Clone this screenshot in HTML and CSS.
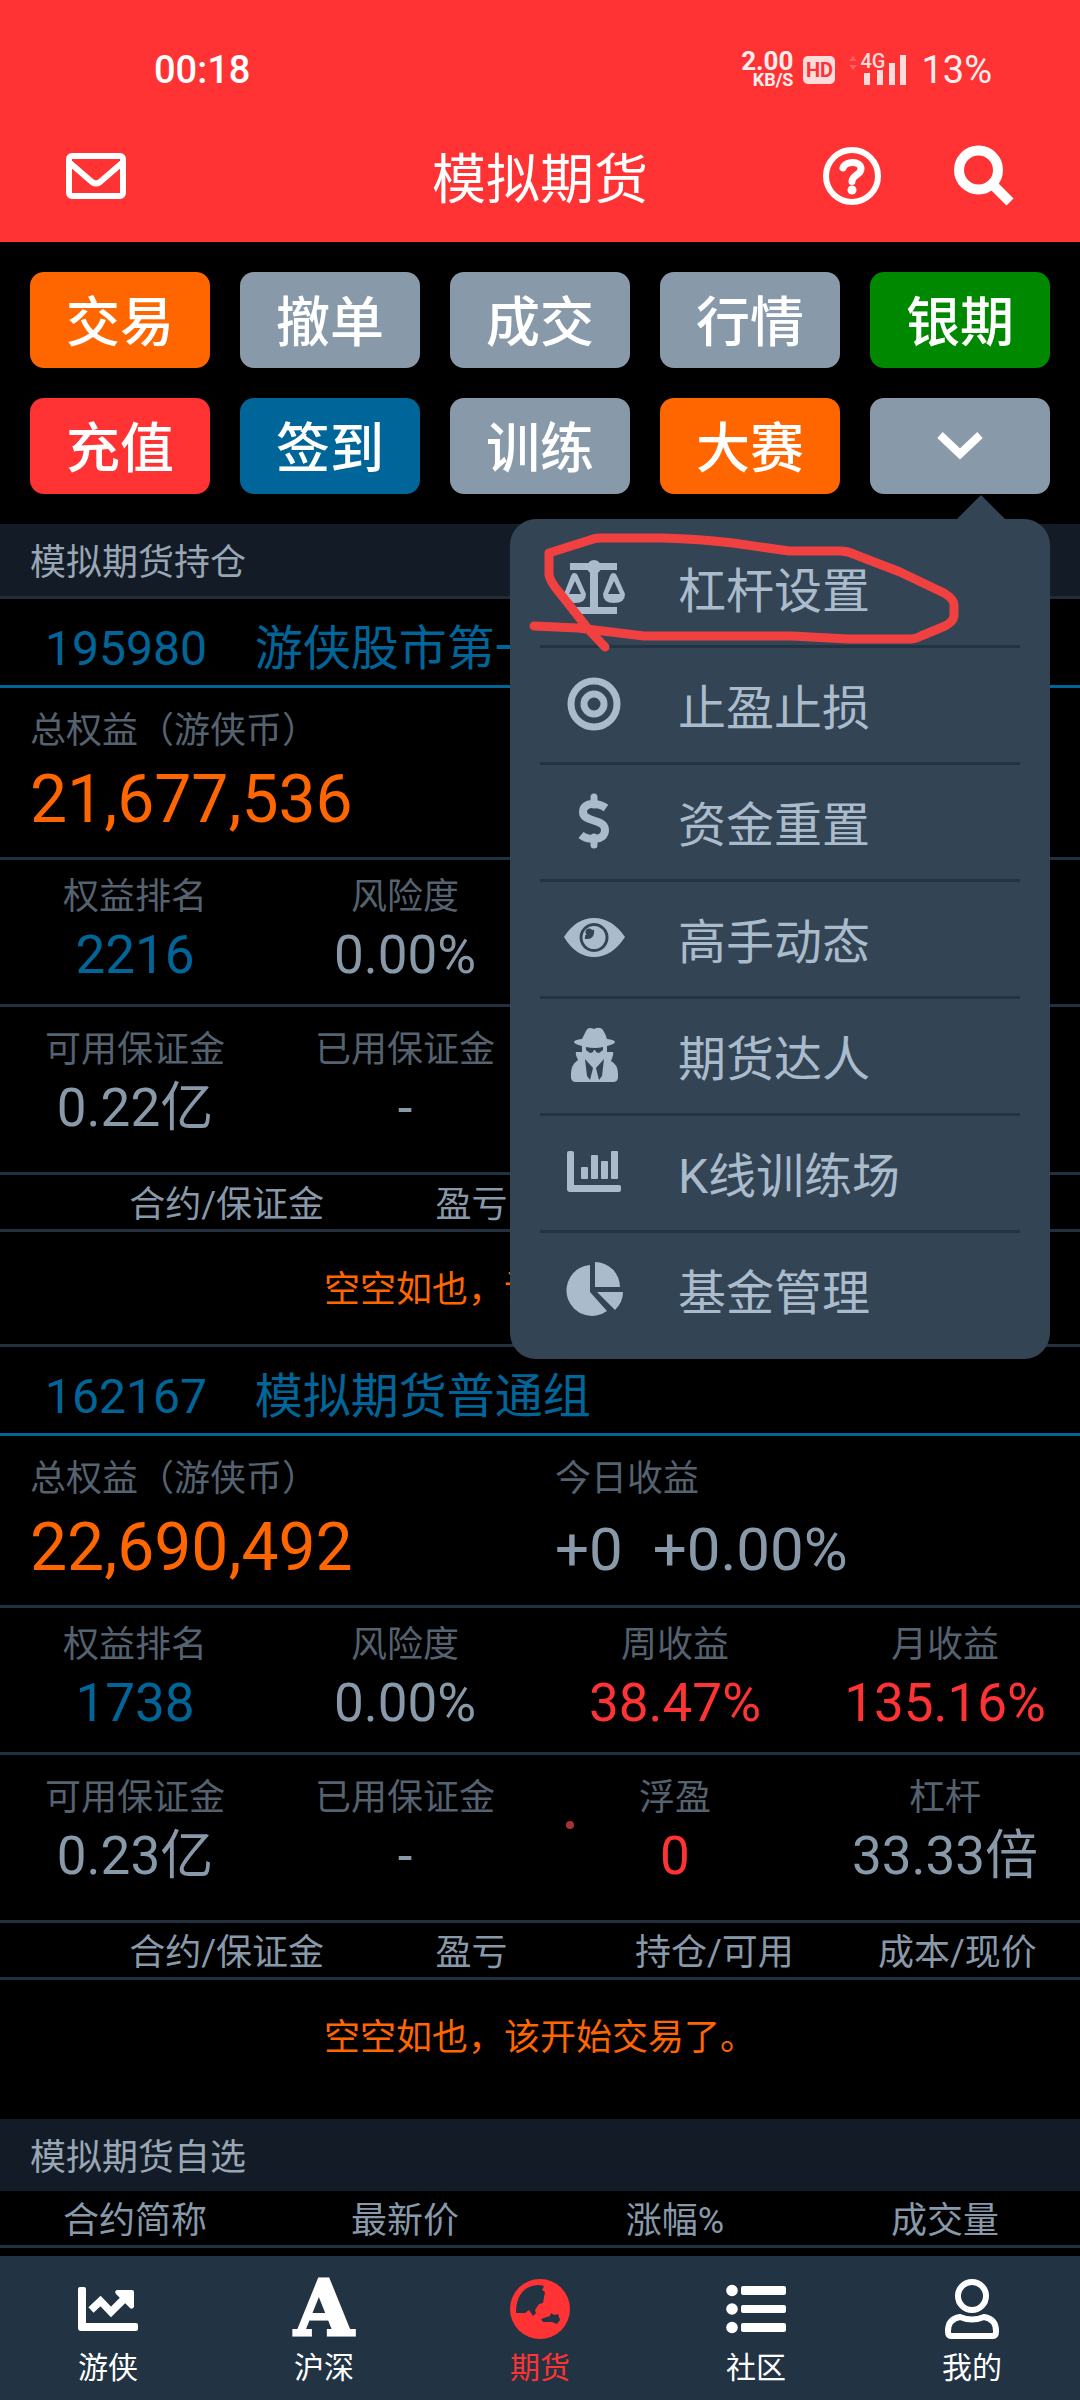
FILE: index.html
```html
<!DOCTYPE html>
<html lang="zh-CN">
<head>
<meta charset="utf-8">
<meta name="viewport" content="width=device-width, initial-scale=1">
<title>模拟期货</title>
<link rel="stylesheet" href="styles.css">
</head>
<body>
<div class="app">
  <header class="top">
    <div class="status">
      <span class="clock">00:18</span>
      <div class="status-side">
        <span class="speed"><b class="speed-num">2.00</b><b class="speed-unit">KB/S</b></span>
        <span class="hd">HD</span>
        <span class="signal">
          <svg width="60" height="34" viewBox="0 0 60 34" fill="#ffdcdc">
            <path d="M0 8l4-5 4 5zM0 12l4 5 4-5z" opacity=".25"/>
            <path d="M15 20h6v12h-6zM28 17h6v15h-6zM40 10h6v22h-6zM51 2h6v30h-6z"/>
          </svg>
          <span class="net">4G</span>
        </span>
        <span class="battery">13%</span>
      </div>
    </div>
    <div class="bar">
      <button class="icon-btn" aria-label="消息">
        <svg width="60" height="46" viewBox="0 0 60 46" fill="none" stroke="#fff" stroke-width="6" stroke-linejoin="round"><rect x="3" y="3" width="54" height="40" rx="3"/><path d="M4 10L26 29Q30 32 34 29L56 10"/></svg>
      </button>
      <h1 class="title">模拟期货</h1>
      <div class="bar-side">
        <button class="icon-btn" aria-label="帮助">
          <svg width="58" height="60" viewBox="0 0 58 60"><circle cx="29" cy="30" r="26" fill="none" stroke="#fff" stroke-width="6"/><path d="M20 22C22 15 38 14 38 23C38 29 29 29 29 35.500" fill="none" stroke="#fff" stroke-width="7" stroke-linecap="round"/><circle cx="29" cy="44" r="4.500" fill="#fff"/></svg>
        </button>
        <button class="icon-btn" aria-label="搜索">
          <svg width="60" height="62" viewBox="0 0 60 62"><circle cx="24.500" cy="25" r="19.500" fill="none" stroke="#fff" stroke-width="10"/><path d="M39 40L56 57" stroke="#fff" stroke-width="10"/></svg>
        </button>
      </div>
    </div>
  </header>

  <main class="content">
    <div class="tools">
      <button class="tool orange">交易</button>
      <button class="tool">撤单</button>
      <button class="tool">成交</button>
      <button class="tool">行情</button>
      <button class="tool green">银期</button>
      <button class="tool red">充值</button>
      <button class="tool blue">签到</button>
      <button class="tool">训练</button>
      <button class="tool orange">大赛</button>
      <div class="more">
        <button class="tool" aria-label="更多" aria-expanded="true">
          <svg width="48" height="34" viewBox="0 0 48 34"><path d="M4 7L24 26L44 7" fill="none" stroke="#fff" stroke-width="8"/></svg>
        </button>
        <nav class="menu">
          <a class="menu-item" href="#lever"><svg class="menu-icon" viewBox="0 0 64 64"><path fill="currentColor" d="M8 8h47v7H36v37h19v7H8v-7h20V15H8z"/><circle fill="currentColor" cx="32" cy="12" r="7"/><path fill="currentColor" fill-rule="evenodd" d="M12 18q3 0 4 3l8 18q0 9-11 9t-11-9l7-18q1-3 3-3zM13 26l-6 13h12zM51 18q3 0 4 3l8 18q0 9-11 9t-11-9l7-18q1-3 3-3zM52 26l-6 13h12z"/></svg>杠杆设置</a>
          <a class="menu-item" href="#stop"><svg class="menu-icon" viewBox="0 0 64 64" fill="none" stroke="currentColor" stroke-width="7"><circle cx="32" cy="32" r="23"/><circle cx="32" cy="32" r="10"/></svg>止盈止损</a>
          <a class="menu-item" href="#reset"><svg class="menu-icon" viewBox="0 0 64 64" fill="none" stroke="currentColor" stroke-width="8"><path d="M44 19C37 14 21 12 21 23C21 34 43 29 43 41C43 53 25 51 19 46"/><path stroke-width="7" stroke-linecap="round" d="M32 8v8M32 48v8"/></svg>资金重置</a>
          <a class="menu-item" href="#experts"><svg class="menu-icon" viewBox="0 0 64 64"><path fill="currentColor" fill-rule="evenodd" d="M2 31Q14 12 32 12T63 31Q50 51 32 51T2 31zM32 17a14.500 14.500 0 1 0 .1 0z"/><circle fill="currentColor" cx="32" cy="31.500" r="11.500"/><path fill="none" stroke="#334455" stroke-width="4" d="M30 24q1 8-7 7"/><circle cx="27" cy="26" r="3.500" fill="#334455"/></svg>高手动态</a>
          <a class="menu-item" href="#masters"><svg class="menu-icon" viewBox="0 0 64 64"><path fill="currentColor" fill-rule="evenodd" d="M24 8q2-5 8-2q6-3 9 1q3 5 4 9q8 1 8 3t-8 4v6h6q1 2-2 9q7 4 7 12v4q0 5-5 5H14q-5 0-5-5v-4q0-8 7-13q-3-6-2-8h6v-6q-8-2-8-4t8-3zM24 24v3l4 3q3 0 4-3l1 0q1 3 4 3l4-3v-3q-8 2-17 0zM23 36l2 17l3 4l3-12zM42 36l-8 9l3 12l3-4z"/></svg>期货达人</a>
          <a class="menu-item" href="#kline"><svg class="menu-icon" viewBox="0 0 64 64" fill="currentColor"><path d="M7 11h3q2 0 2 2v32h45q2 0 2 2v3q0 2-2 2H8q-3 0-3-3V13q0-2 2-2z"/><rect x="19" y="27" width="7" height="12" rx="1"/><rect x="29" y="15" width="7" height="24" rx="1"/><rect x="39" y="21" width="7" height="18" rx="1"/><rect x="49" y="11" width="7" height="28" rx="1"/></svg>K线训练场</a>
          <a class="menu-item" href="#funds"><svg class="menu-icon" viewBox="0 0 64 64" fill="currentColor"><path d="M28 8a25.500 25.500 0 1 0 17 46L28 35z"/><path d="M33 5a25 25 0 0 1 25 25H33zM35 35h26q0 10-8 18z"/></svg>基金管理</a>
          <svg class="scribble" width="440" height="130" viewBox="0 0 440 130" fill="none" stroke="#f04040" stroke-width="9" stroke-linecap="round" stroke-linejoin="round"><path d="M14 97L58 99L124 107L272 107L328 110H390Q396 110 401 107L425 97Q433 93 434 87V76Q434 70 424 64L380 43L336 26Q328 22 320 22H269L213 14Q180 10 143 9H80Q75 9 70 11L29 24V46Q31 54 39 63L69 101L85 118"/></svg>
        </nav>
      </div>
    </div>

    <h2 class="section lined">模拟期货持仓</h2>

    <section class="account">
      <a class="account-name" href="#195980"><span>195980</span><span>游侠股市第一</span></a>
      <div class="equity">
        <div><div class="label">总权益（游侠币）</div><div class="total">21,677,536</div></div>
      </div>
      <div class="stats">
        <div><div class="label">权益排名</div><div class="value rank">2216</div></div>
        <div><div class="label">风险度</div><div class="value">0.00%</div></div>
      </div>
      <div class="stats margin">
        <div><div class="label">可用保证金</div><div class="value">0.22亿</div></div>
        <div><div class="label">已用保证金</div><div class="value">-</div></div>
      </div>
      <table class="positions">
        <colgroup><col class="c1"><col class="c2"><col class="c3"><col class="c4"><col class="c5"></colgroup>
        <thead><tr><th>合约/保证金</th><th>盈亏</th><td colspan="3"></td></tr></thead>
        <tbody><tr><td class="empty" colspan="5">空空如也，该开始交易了。</td></tr></tbody>
      </table>
    </section>

    <section class="account last">
      <a class="account-name" href="#162167"><span>162167</span><span>模拟期货普通组</span></a>
      <div class="equity">
        <div><div class="label">总权益（游侠币）</div><div class="total">22,690,492</div></div>
        <div><div class="label">今日收益</div><div class="today"><span>+0</span><span>+0.00%</span></div></div>
      </div>
      <div class="stats">
        <div><div class="label">权益排名</div><div class="value rank">1738</div></div>
        <div><div class="label">风险度</div><div class="value">0.00%</div></div>
        <div><div class="label">周收益</div><div class="value up">38.47%</div></div>
        <div><div class="label">月收益</div><div class="value up">135.16%</div></div>
      </div>
      <div class="stats margin">
        <div><div class="label">可用保证金</div><div class="value">0.23亿</div></div>
        <div><div class="label">已用保证金</div><div class="value">-</div></div>
        <div class="marked"><div class="label">浮盈</div><div class="value up">0</div></div>
        <div><div class="label">杠杆</div><div class="value">33.33倍</div></div>
      </div>
      <table class="positions">
        <colgroup><col class="c1"><col class="c2"><col class="c3"><col class="c4"><col class="c5"></colgroup>
        <thead><tr><th>合约/保证金</th><th>盈亏</th><th>持仓/可用</th><th>成本/现价</th><td></td></tr></thead>
        <tbody><tr><td class="empty" colspan="5">空空如也，该开始交易了。</td></tr></tbody>
      </table>
    </section>

    <h2 class="section">模拟期货自选</h2>
    <table class="watch">
      <thead><tr><th>合约简称</th><th>最新价</th><th>涨幅%</th><th>成交量</th></tr></thead>
    </table>
  </main>

  <nav class="tabs">
    <a class="tab" href="#home"><svg class="tab-icon" viewBox="0 0 64 64"><path fill="#fff" d="M4 10h4q2 0 2 2v34h50q2 0 2 2v4q0 2-2 2H5q-3 0-3-3V12q0-2 2-2z"/><path fill="none" stroke="#fff" stroke-width="7.500" d="M15 33L24.500 24L35 35L51 19"/><path fill="#fff" d="M41 13h15q2 0 2 2v15q-2 3-4 1L40 17q-2-3 1-4z"/></svg>游侠</a>
    <a class="tab" href="#stocks"><span class="tab-icon letter">A</span>沪深</a>
    <a class="tab active" href="#futures"><svg class="tab-icon" viewBox="0 0 64 64"><circle cx="32" cy="32" r="30" fill="#f33"/><path fill="#223344" d="M8 36Q8 18 19 11Q28 6 36 9L34 13L37 15L35 26L31 27L27 33L28 36L25 39L21 33L17 36zM33 42L42 39L43 36L46 38L50 37L52 43L49 47L44 45L35 45z"/></svg>期货</a>
    <a class="tab" href="#community"><svg class="tab-icon" viewBox="0 0 64 64" fill="#fff"><circle cx="8" cy="13.500" r="5.800"/><circle cx="8" cy="32" r="5.800"/><circle cx="8" cy="50.500" r="5.800"/><rect x="17" y="9" width="45" height="9" rx="2"/><rect x="17" y="28" width="45" height="8" rx="2"/><rect x="17" y="46" width="45" height="9" rx="2"/></svg>社区</a>
    <a class="tab" href="#me"><svg class="tab-icon" viewBox="0 0 64 64" fill="none" stroke="#fff" stroke-width="6" stroke-linejoin="round"><circle cx="32" cy="19" r="14"/><path d="M20 40Q8 42 8 54Q8 59 11 59H53Q56 59 56 54Q56 42 44 40Q32 45 20 40z"/></svg>我的</a>
  </nav>
</div>
</body>
</html>
```

FILE: styles.css
```css
* {
  box-sizing: border-box;
}

body {
  margin: 0;
  background: #000;
  color: #8899aa;
  font-family: Roboto, "Noto Sans CJK SC", sans-serif;
  font-size: 36px;
}

a {
  color: inherit;
  text-decoration: none;
}

button {
  border: 0;
  padding: 0;
  background: none;
  color: #fff;
  font: inherit;
}

svg {
  display: block;
}

h1,
h2 {
  margin: 0;
  font-weight: 400;
}

table {
  width: 100%;
  border-collapse: separate;
  border-spacing: 0;
  table-layout: fixed;
}

th,
td {
  padding: 0;
  font-weight: 400;
}

.app {
  display: flex;
  flex-direction: column;
  min-height: 100vh;
}

/* header */

.top {
  background: #f33;
  color: #fff;
}

.status {
  display: flex;
  justify-content: space-between;
  align-items: center;
  height: 112px;
  padding: 28px 88px 0 154px;
}

.clock {
  font-size: 38px;
  font-weight: 500;
}

.status-side {
  display: flex;
  align-items: center;
  gap: 10px;
}

.speed {
  display: flex;
  flex-direction: column;
  align-items: flex-end;
  color: #ffeeee;
}

.speed-num {
  font-size: 26px;
  line-height: 20px;
}

.speed-unit {
  font-size: 18px;
  line-height: 18px;
}

.hd {
  width: 32px;
  border-radius: 5px;
  background: #ffdcdc;
  color: #f33;
  font-size: 20px;
  font-weight: 700;
  line-height: 28px;
  text-align: center;
}

.signal {
  position: relative;
  margin-left: 4px;
}

.net {
  position: absolute;
  top: -2px;
  left: 11px;
  color: #ffdcdc;
  font-size: 20px;
  font-weight: 500;
  line-height: 20px;
}

.battery {
  margin-left: 2px;
  color: #ffeeee;
  font-size: 38px;
}

.bar {
  display: grid;
  grid-template-columns: 1fr auto 1fr;
  align-items: center;
  height: 130px;
  padding: 0 66px 2px;
}

.title {
  padding-top: 10px;
  font-size: 54px;
  line-height: 118px;
}

.bar-side {
  display: flex;
  align-items: center;
  justify-content: flex-end;
  gap: 73px;
}

.icon-btn {
  justify-self: start;
}

/* shortcuts */

.content {
  flex: 1;
}

.tools {
  display: grid;
  grid-template-columns: repeat(5, 1fr);
  gap: 30px;
  padding: 30px;
}

.tool {
  display: flex;
  align-items: center;
  justify-content: center;
  width: 100%;
  height: 96px;
  padding-bottom: 3px;
  border-radius: 14px;
  background: #8899aa;
  font-size: 54px;
  font-weight: 500;
}

.orange {
  background: #f60;
}

.green {
  background: #080;
}

.red {
  background: #f33;
}

.blue {
  background: #069;
}

.more {
  position: relative;
}

/* drop-down over the page */

.menu {
  position: absolute;
  z-index: 1;
  top: 121px;
  right: 0;
  width: 540px;
  padding: 12px 30px;
  border-radius: 26px;
  background: #334455;
  color: #aabbcc;
}

.menu::before {
  content: "";
  position: absolute;
  top: -24px;
  right: 45px;
  border: 24px solid transparent;
  border-top: 0;
  border-bottom-color: #334455;
}

.menu-item {
  display: flex;
  align-items: center;
  gap: 52px;
  height: 117px;
  padding: 0 0 3px 22px;
  border-bottom: 3px solid #223344;
  font-size: 48px;
}

.menu-item:last-of-type {
  height: 114px;
  border-bottom: 0;
}

.menu-icon {
  width: 64px;
  height: 64px;
}

.scribble {
  position: absolute;
  top: 10px;
  left: 10px;
}

/* accounts */

.section {
  padding: 6px 30px 0;
  background: #131b26;
  font-size: 36px;
  line-height: 66px;
  color: #99a6b4;
}

.lined {
  border-bottom: 3px solid #222c38;
}

.account-name {
  display: flex;
  gap: 48px;
  padding: 14px 45px 0;
  border-bottom: 3px solid #069;
  color: #069;
  font-size: 48px;
  line-height: 72px;
}

.equity {
  display: grid;
  grid-template-columns: 1fr 1fr;
  gap: 30px;
  padding: 18px 30px 13px;
  border-bottom: 3px solid #223040;
}

.label {
  color: #556270;
  line-height: 50px;
}

.total {
  color: #f60;
  font-size: 66px;
  line-height: 88px;
}

.today {
  display: flex;
  gap: 30px;
  padding-top: 4px;
  font-size: 60px;
  line-height: 84px;
}

.stats {
  display: grid;
  grid-template-columns: repeat(4, 1fr);
  padding: 12px 0 16px;
  border-bottom: 3px solid #223040;
  text-align: center;
}

.margin {
  padding: 18px 0 31px;
}

.value {
  font-size: 53px;
  line-height: 66px;
}

.rank {
  color: #069;
}

.up {
  color: #f33;
}

.marked {
  position: relative;
}

.marked::before {
  content: "";
  position: absolute;
  top: 48px;
  left: 26px;
  width: 8px;
  height: 8px;
  border-radius: 50%;
  background: #a83232;
}

th {
  padding-top: 6px;
  line-height: 48px;
}

thead th,
thead td {
  border-bottom: 3px solid #223040;
}

.positions th {
  text-align: right;
}

.c1 {
  width: 30%;
}

.c2 {
  width: 17%;
}

.c3 {
  width: 26.5%;
}

.c4 {
  width: 22.5%;
}

.c5 {
  width: 4%;
}

.empty {
  padding-top: 4px;
  border-bottom: 3px solid #223040;
  color: #f60;
  line-height: 108px;
  text-align: center;
}

.last .empty {
  padding-bottom: 27px;
  border-bottom: 0;
}

/* bottom tabs */

.tabs {
  display: grid;
  grid-template-columns: repeat(5, 1fr);
  height: 144px;
  background: #223344;
  color: #fff;
}

.tab {
  display: flex;
  flex-direction: column;
  align-items: center;
  padding-top: 21px;
  font-size: 30px;
  line-height: 54px;
}

.active {
  color: #f33;
}

.tab-icon {
  width: 64px;
  height: 64px;
}

.letter {
  display: flex;
  justify-content: center;
  font-family: "DejaVu Serif", serif;
  font-size: 76px;
  font-weight: 700;
  line-height: 64px;
  -webkit-text-stroke: 3px #fff;
}
```
